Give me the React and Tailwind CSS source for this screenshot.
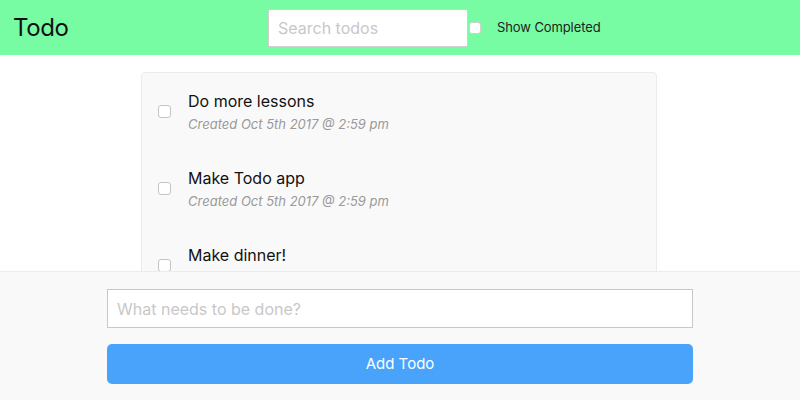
const todos = [
  { id: 1, text: 'Do more lessons', created: 'Created Oct 5th 2017 @ 2:59 pm' },
  { id: 2, text: 'Make Todo app', created: 'Created Oct 5th 2017 @ 2:59 pm' },
  { id: 3, text: 'Make dinner!', created: 'Created Oct 5th 2017 @ 2:59 pm' },
];

function Box({ className = '' }) {
  return <div className={`w-[13px] h-[13px] shrink-0 rounded-[3px] bg-white border border-[#c4c4c4] ${className}`} />;
}

export default function App() {
  return (
    <div className="relative h-[400px] w-[800px] flex flex-col overflow-hidden bg-white font-['Inter',sans-serif] text-[#111]">
      <header className="h-[55px] shrink-0 bg-[#77fca4] flex items-center">
        <h1 className="ml-[13px] w-[255px] text-[24px] leading-none tracking-[-0.4px]">Todo</h1>
        <input
          placeholder="Search todos"
          className="w-[200px] h-[38px] px-[9px] bg-white border border-[#cfcfcf] text-[16px] placeholder-[#c8c8c8] outline-none"
        />
        <div className="ml-[1px] w-[12px] h-[12px] rounded-[3px] bg-white border border-[#d0d0d0]" />
        <span className="ml-[16px] text-[13px] tracking-[-0.1px] text-[#222]">Show Completed</span>
      </header>

      <main className="flex-1 min-h-0 overflow-hidden pt-[17px]">
        <div className="ml-[141px] w-[516px] bg-[#f9f9f9] border border-[#ececec] rounded-[4px]">
          {todos.map((t) => (
            <div key={t.id} className="h-[77px] flex items-center pl-[16px]">
              <Box />
              <div className="ml-[17px] h-full pt-[18px] flex flex-col">
                <span className="text-[16px] leading-[20px]">{t.text}</span>
                <span className="mt-[4px] text-[13px] leading-[18px] italic text-[#9a9a9a]">{t.created}</span>
              </div>
            </div>
          ))}
        </div>
      </main>

      {/* fixed add-todo bar sits over the list */}
      <footer className="absolute bottom-0 left-0 right-0 h-[129px] bg-[#f9f9f9] border-t border-[#ececec] flex flex-col px-[107px] pt-[17px]">
        <input
          placeholder="What needs to be done?"
          className="h-[39px] w-full px-[9px] bg-white border border-[#c8c8c8] text-[16px] placeholder-[#c8c8c8] outline-none"
        />
        <button className="mt-[16px] h-[40px] w-full rounded-[5px] bg-[#4aa3fb] text-white text-[15px]">
          Add Todo
        </button>
      </footer>
    </div>
  );
}
